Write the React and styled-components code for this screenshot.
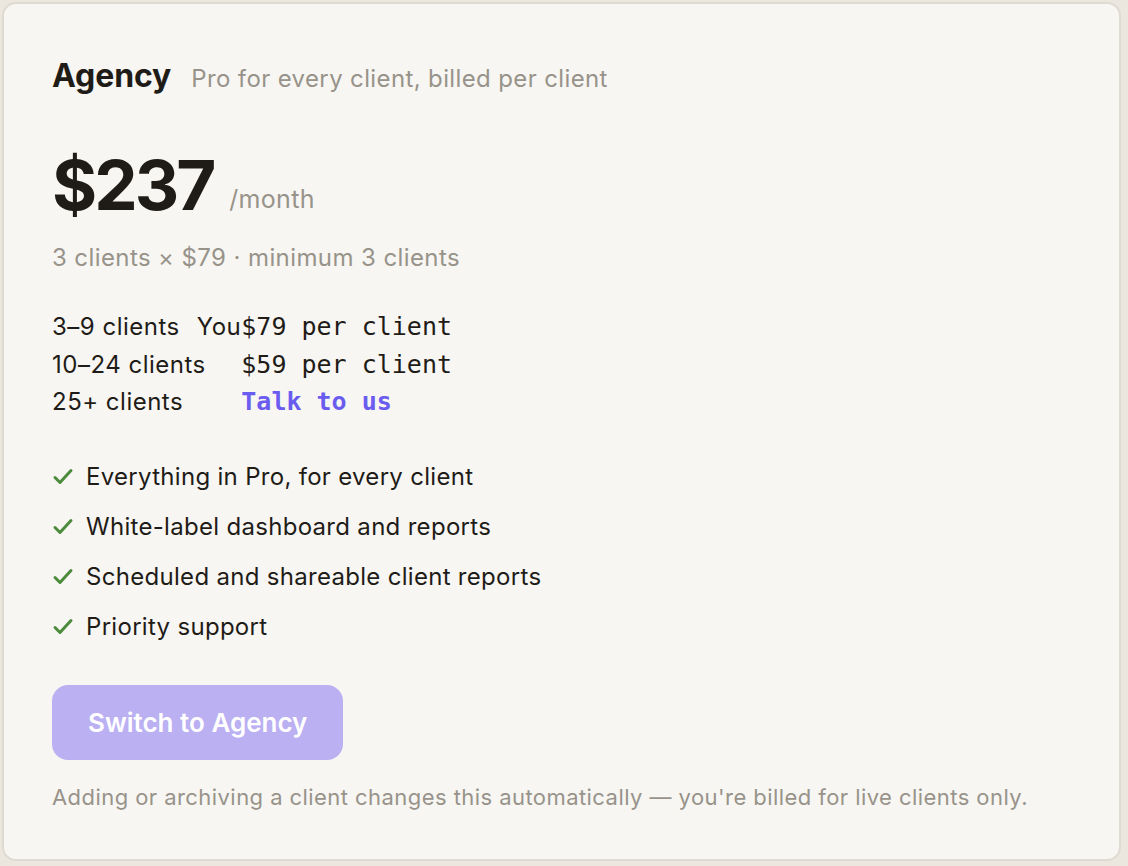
import React from "react";
import styled, { createGlobalStyle } from "styled-components";

const GlobalStyle = createGlobalStyle`
  html, body {
    margin: 0;
    background: #ebe6de;
  }
  body {
    font-family: Inter, "Noto Sans", sans-serif;
    -webkit-font-smoothing: antialiased;
  }
`;

const tiers = [
  { range: "3–9 clients", price: "$79 per client", current: true },
  { range: "10–24 clients", price: "$59 per client" },
  { range: "25+ clients", price: "Talk to us", contact: true },
];

const features = [
  "Everything in Pro, for every client",
  "White-label dashboard and reports",
  "Scheduled and shareable client reports",
  "Priority support",
];

const Check = () => (
  <svg width="22" height="22" viewBox="0 0 22 22" fill="none">
    <path
      d="M3 11.5l5 5L19 4.5"
      stroke="#4c8b3c"
      strokeWidth="3"
      strokeLinecap="round"
      strokeLinejoin="round"
    />
  </svg>
);

const App = () => {
  return (
    <Page>
      <GlobalStyle />
      <Card>
        <Header>
          <Title>Agency</Title>
          <Tagline>Pro for every client, billed per client</Tagline>
        </Header>

        <PriceRow>
          <Amount>$237</Amount>
          <Period>/month</Period>
        </PriceRow>
        <Breakdown>3 clients × $79 · minimum 3 clients</Breakdown>

        <Tiers>
          {tiers.map((t) => (
            <React.Fragment key={t.range}>
              <Range>
                {t.range}
                {t.current && <Badge>You</Badge>}
              </Range>
              <TierPrice contact={t.contact}>{t.price}</TierPrice>
            </React.Fragment>
          ))}
        </Tiers>

        <Features>
          {features.map((f) => (
            <Feature key={f}>
              <Check />
              {f}
            </Feature>
          ))}
        </Features>

        <SwitchButton disabled>Switch to Agency</SwitchButton>

        <Note>
          Adding or archiving a client changes this automatically — you're
          billed for live clients only.
        </Note>
      </Card>
    </Page>
  );
};

const Page = styled.div`
  padding: 2px 7px 5px 2px;
`;

const Card = styled.div`
  box-sizing: border-box;
  height: 859px;
  background: #f7f6f2;
  border: 2px solid #e0dbd2;
  border-radius: 14px;
  padding: 52px 48px 0 48px;
  display: flex;
  flex-direction: column;
  align-items: flex-start;
`;

const Header = styled.div`
  display: flex;
  align-items: baseline;
  gap: 20px;
`;

const Title = styled.h2`
  margin: 0;
  font-size: 32px;
  font-weight: 700;
  letter-spacing: -0.1px;
  color: #1f1c18;
`;

const Tagline = styled.span`
  font-size: 24px;
  letter-spacing: 0.37px;
  color: #98938a;
`;

const PriceRow = styled.div`
  margin-top: 56px;
  line-height: 1;
  white-space: nowrap;
`;

const Amount = styled.span`
  font-size: 69px;
  font-weight: 700;
  letter-spacing: -3px;
  color: #1f1c18;
`;

const Period = styled.span`
  margin-left: 16px;
  vertical-align: 2px;
  font-size: 25px;
  letter-spacing: 0.3px;
  color: #98938a;
`;

const Breakdown = styled.div`
  margin-top: 23px;
  font-size: 24px;
  letter-spacing: 0.4px;
  color: #98938a;
`;

const Tiers = styled.div`
  display: grid;
  grid-template-columns: auto 1fr;
  row-gap: 6px;
  margin-top: 39px;
  font-size: 24px;
  letter-spacing: 0.5px;
  line-height: 31.5px;
  color: #1f1c18;
`;

const Range = styled.div`
  white-space: nowrap;
`;

const Badge = styled.span`
  margin-left: 17px;
`;

const TierPrice = styled.div`
  font-family: "DejaVu Sans Mono", "Liberation Mono", monospace;
  font-size: 25px;
  letter-spacing: 0;
  color: ${(p) => (p.contact ? "#6b5cf0" : "#1f1c18")};
  font-weight: ${(p) => (p.contact ? 700 : 400)};
  white-space: nowrap;
`;

const Features = styled.ul`
  list-style: none;
  margin: 43px 0 0;
  padding: 0;
  display: flex;
  flex-direction: column;
  gap: 18px;
`;

const Feature = styled.li`
  display: flex;
  align-items: center;
  gap: 12px;
  font-size: 24px;
  letter-spacing: 0.3px;
  line-height: 32px;
  color: #1f1c18;
`;

const SwitchButton = styled.button`
  margin-top: 42px;
  height: 75px;
  padding: 0 36px;
  border: none;
  border-radius: 16px;
  background: #bbb0f2;
  color: #fff;
  font-family: inherit;
  font-size: 26px;
  font-weight: 600;
`;

const Note = styled.p`
  margin: 24px 0 0;
  font-size: 22px;
  letter-spacing: 0.44px;
  color: #98938a;
`;

export default App;
